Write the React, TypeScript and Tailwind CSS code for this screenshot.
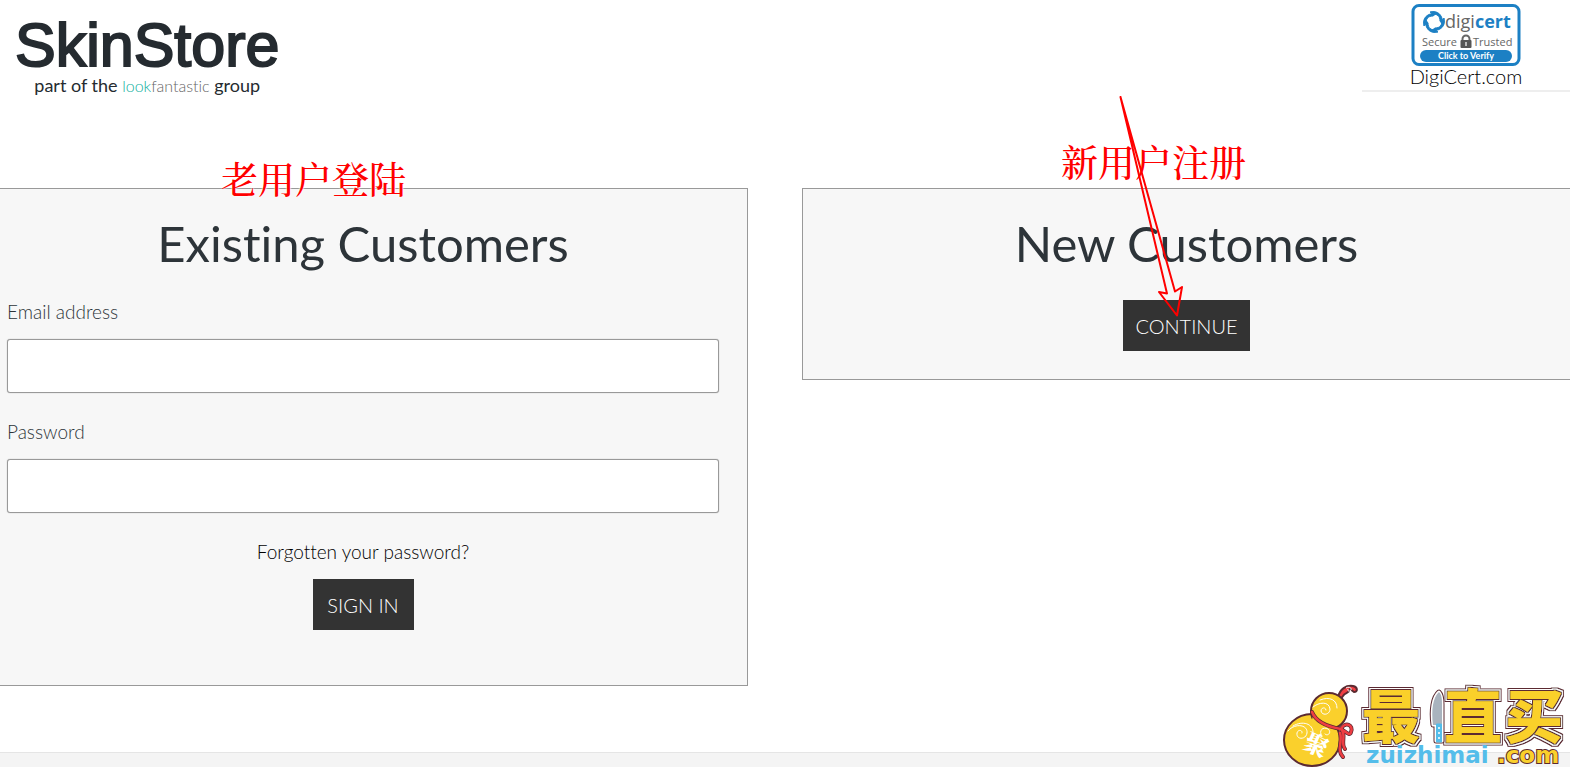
import type { ReactNode } from "react";

function BrandLogo() {
	return (
		<a href="#home" className="flex flex-col items-center text-[#252b30]">
			<span className="font-['Liberation_Sans',sans-serif] text-[61px] leading-[58px] [-webkit-text-stroke:2px_#252b30]">
				SkinStore
			</span>
			<span className="text-[18px] leading-[22px]">
				part of the{" "}
				<span className="text-[16px] font-light text-[#10b0a0]">look</span>
				<span className="text-[16px] font-light text-[#666]">fantastic</span>{" "}
				group
			</span>
		</a>
	);
}

const BLADE = "M-10 4C-12-4-7-9 3-9L-1-6C-6-6-8-3-8 1z";

function DigicertSeal() {
	return (
		<svg
			viewBox="0 0 110 62"
			className="h-[62px] w-[110px]"
			role="img"
			aria-label="DigiCert Secure Trusted"
		>
			<rect
				x="2"
				y="1.5"
				width="106"
				height="59"
				rx="6"
				fill="#fff"
				stroke="#1c80c4"
				strokeWidth="3"
			/>
			<g transform="translate(23 18)" fill="#1c80c4" stroke="#1c80c4">
				<path d={BLADE} />
				<path d={BLADE} transform="rotate(90)" />
				<path d={BLADE} transform="rotate(180)" />
				<path d={BLADE} transform="rotate(270)" />
			</g>
			<g className="font-['Open_Sans',sans-serif]">
				<text x="34" y="24" fontSize="18" fill="#666">
					digi
					<tspan fontWeight="700" fill="#1c80c4">
						cert
					</tspan>
				</text>
				<text x="11" y="42" fontSize="11" fill="#666">
					Secure
				</text>
				<text x="62" y="42" fontSize="11" fill="#666">
					Trusted
				</text>
				<rect x="9" y="46" width="92" height="12" rx="6" fill="#1c80c4" />
				<text
					x="55"
					y="55"
					fontSize="9"
					fontWeight="700"
					fill="#fff"
					textAnchor="middle"
					className="font-['Lato',sans-serif]"
				>
					Click to Verify
				</text>
			</g>
			<path
				d="M51.5 37v-2a3 3 0 0 1 7 0v2"
				fill="none"
				stroke="#666"
				strokeWidth="2"
			/>
			<rect x="49.5" y="36" width="11" height="8" rx="1" fill="#555" />
			<path d="M55 38v4" stroke="#ddd" strokeWidth="1.5" />
		</svg>
	);
}

function Field({
	id,
	type,
	children,
}: {
	id: string;
	type: string;
	children: ReactNode;
}) {
	return (
		<div className="mb-6 flex flex-col gap-3">
			<label htmlFor={id} className="text-[19px] leading-[30px] font-light">
				{children}
			</label>
			<input
				id={id}
				type={type}
				className="h-[54px] w-full rounded-[3px] border border-[#999] bg-white px-3 shadow-[0_0_1px_#999]"
			/>
		</div>
	);
}

function PanelButton({ children }: { children: ReactNode }) {
	return (
		<button
			type="submit"
			className="h-[51px] min-w-[101px] bg-[#333] px-3 text-[20px] font-light text-white uppercase"
		>
			{children}
		</button>
	);
}

function Note({ children }: { children: ReactNode }) {
	return (
		<span
			lang="zh-CN"
			className="font-['Noto_Serif_CJK_SC','Noto_Sans_CJK_SC',sans-serif] text-[37px] leading-[44px] font-medium whitespace-nowrap text-[#f00] [text-shadow:0_0_2px_#fff,0_0_2px_#fff]"
		>
			{children}
		</span>
	);
}

function Arrow() {
	return (
		<svg
			viewBox="0 0 80 230"
			className="absolute top-[90px] left-[1110px] h-[230px] w-20"
			aria-hidden="true"
		>
			<path
				d="M10.5 7L57 203.5 49 202 67 225.5 72 197 65 201.5z"
				fill="none"
				stroke="#f00"
				strokeWidth="2"
				strokeLinejoin="round"
			/>
		</svg>
	);
}

const RIBBON =
	"M32 29c4 10 17 15 29 17m0 0c4-8 13-4 10 3-1 5-6-1-10-3 6 6-1 14 4 20m-5-16c3 8-4 17 3 24";

const KNIFE = "M156 58V42h-3C151 27 153 14 159 9c3 3 3 8 3 12v37z";

function Watermark() {
	return (
		<svg
			viewBox="0 -26 290 110"
			className="absolute right-0 bottom-0 h-[110px] w-[290px]"
			role="img"
			aria-label="最值买 zuizhimai.com"
		>
			<defs>
				{/* brown, white and brown rings round the yellow letters */}
				<filter id="rings" x="-10%" y="-20%" width="120%" height="140%">
					<feMorphology
						in="SourceAlpha"
						operator="dilate"
						radius="3"
						result="outer"
					/>
					<feMorphology
						in="SourceAlpha"
						operator="dilate"
						radius="2"
						result="middle"
					/>
					<feMorphology
						in="SourceAlpha"
						operator="dilate"
						radius="1"
						result="inner"
					/>
					<feFlood floodColor="#5b2a31" result="brown" />
					<feFlood floodColor="#fff" result="white" />
					<feComposite in="brown" in2="outer" operator="in" result="ring3" />
					<feComposite in="white" in2="middle" operator="in" result="ring2" />
					<feComposite in="brown" in2="inner" operator="in" result="ring1" />
					<feMerge>
						<feMergeNode in="ring3" />
						<feMergeNode in="ring2" />
						<feMergeNode in="ring1" />
						<feMergeNode in="SourceGraphic" />
					</feMerge>
				</filter>
			</defs>
			<g stroke="#5b2a31" strokeWidth="2" strokeLinejoin="round">
				<path
					d="M58 14C60 6 66 2 73 3c5 1 5 6 1 6l-4-3c-1 5-5 3-7 7l-3 4z"
					fill="#ee3d42"
				/>
				<ellipse cx="32" cy="57" rx="28" ry="26" fill="#fad02c" />
				<circle cx="49" cy="28" r="18" fill="#fad02c" />
			</g>
			<path d="M66 5c3-2 6 0 5 2s-4 1-3-1" fill="none" stroke="#fff" />
			<path d="M33 33c7 8 16 10 24 11l-2 7c-8 0-17-3-24-11z" fill="#fad02c" />
			<g fill="none" stroke="#fff" strokeLinecap="round">
				<path d="M33 24c6-5 16-6 17 2 0 6-8 7-9 2 0-4 5-4 5-1" />
				<path d="M40 17c10-4 17 0 17 8" />
				<path d="M8 48c6-8 20-7 19 2-1 7-11 7-10 0 1-4 6-3 5 0" />
				<path d="M13 43c10-6 20-2 20 6" />
				<path d="M42 53c-4-5 1-10 6-7 4 3 0 8-3 5" />
			</g>
			<g fill="none" strokeLinecap="round" strokeLinejoin="round">
				<path d={RIBBON} stroke="#5b2a31" strokeWidth="4" />
				<path d={RIBBON} stroke="#ee3d42" strokeWidth="2.500" />
			</g>
			<text
				x="24"
				y="71"
				transform="rotate(25 37 63)"
				className="font-['Noto_Serif_CJK_SC','Noto_Sans_CJK_SC',sans-serif]"
				fontSize="24"
				fontWeight="900"
				fill="#fff"
			>
				聚
			</text>
			<g
				className="font-['Noto_Sans_CJK_SC',sans-serif]"
				fontSize="58"
				fontWeight="900"
				fill="#fad02c"
				filter="url(#rings)"
			>
				<text x="82" y="55">
					最
				</text>
				<text x="164" y="55">
					直
				</text>
				<text x="225" y="55">
					买
				</text>
			</g>
			<g strokeLinejoin="round">
				<path d={KNIFE} fill="#5b2a31" stroke="#5b2a31" strokeWidth="5" />
				<path d={KNIFE} fill="#a9b3be" stroke="#fff" strokeWidth="3" />
				<path d={KNIFE} fill="#a9b3be" />
			</g>
			<path d="M156.500 41h5v18h-5z" fill="#54bdea" stroke="#54bdea" />
			<path
				d="M159 44v13"
				stroke="#fff"
				strokeWidth="1.500"
				strokeDasharray="2 3"
			/>
			<g
				className="font-['DejaVu_Sans',sans-serif]"
				fontSize="23"
				fontWeight="700"
			>
				<text x="86" y="80" fill="#54bdea">
					zuizhimai
				</text>
				<text
					x="217"
					y="80"
					fill="#fad02c"
					stroke="#5b2a31"
					strokeWidth="2"
					paintOrder="stroke"
				>
					.com
				</text>
			</g>
		</svg>
	);
}

export default function App() {
	return (
		<div className="relative flex min-h-screen flex-col overflow-hidden bg-white font-['Lato',sans-serif] text-[#2d3439] [font-variant-ligatures:none]">
			<header className="flex h-[188px] items-start justify-between">
				<div className="pt-4 pl-[15px]">
					<BrandLogo />
				</div>
				<div className="flex w-[208px] flex-col items-center border-b-2 border-[#eee] pt-1 pb-1">
					<DigicertSeal />
					<a
						href="#digicert"
						className="text-[20px] leading-5 font-light text-black"
					>
						DigiCert.com
					</a>
				</div>
			</header>
			<main className="mb-[66px] grid grid-cols-[748fr_768fr] items-start gap-[54px]">
				<form className="border-y border-r border-[#999] bg-[#f7f7f7] pt-[22px] pr-7 pb-[55px] pl-[7px]">
					<h1 className="mb-[22px] text-center text-[49px] leading-[64px]">
						Existing Customers
					</h1>
					<Field id="email" type="email">
						Email address
					</Field>
					<Field id="password" type="password">
						Password
					</Field>
					<div className="flex flex-col items-center gap-3">
						<a
							href="#forgot"
							className="text-[19px] leading-[30px] font-light text-black"
						>
							Forgotten your password?
						</a>
						<PanelButton>Sign in</PanelButton>
					</div>
				</form>
				<form className="flex flex-col items-center border-y border-l border-[#999] bg-[#f7f7f7] pt-[22px] pb-7">
					<h2 className="mb-[25px] text-[49px] leading-[64px]">
						New Customers
					</h2>
					<PanelButton>Continue</PanelButton>
				</form>
			</main>
			<footer className="flex-1 border-t border-[#e5e5e5] bg-[#f4f4f4]" />
			<Watermark />
			<div className="absolute top-[156px] left-[221px]">
				<Note>老用户登陆</Note>
			</div>
			<div className="absolute top-[139px] left-[1061px]">
				<Note>新用户注册</Note>
			</div>
			<Arrow />
		</div>
	);
}
